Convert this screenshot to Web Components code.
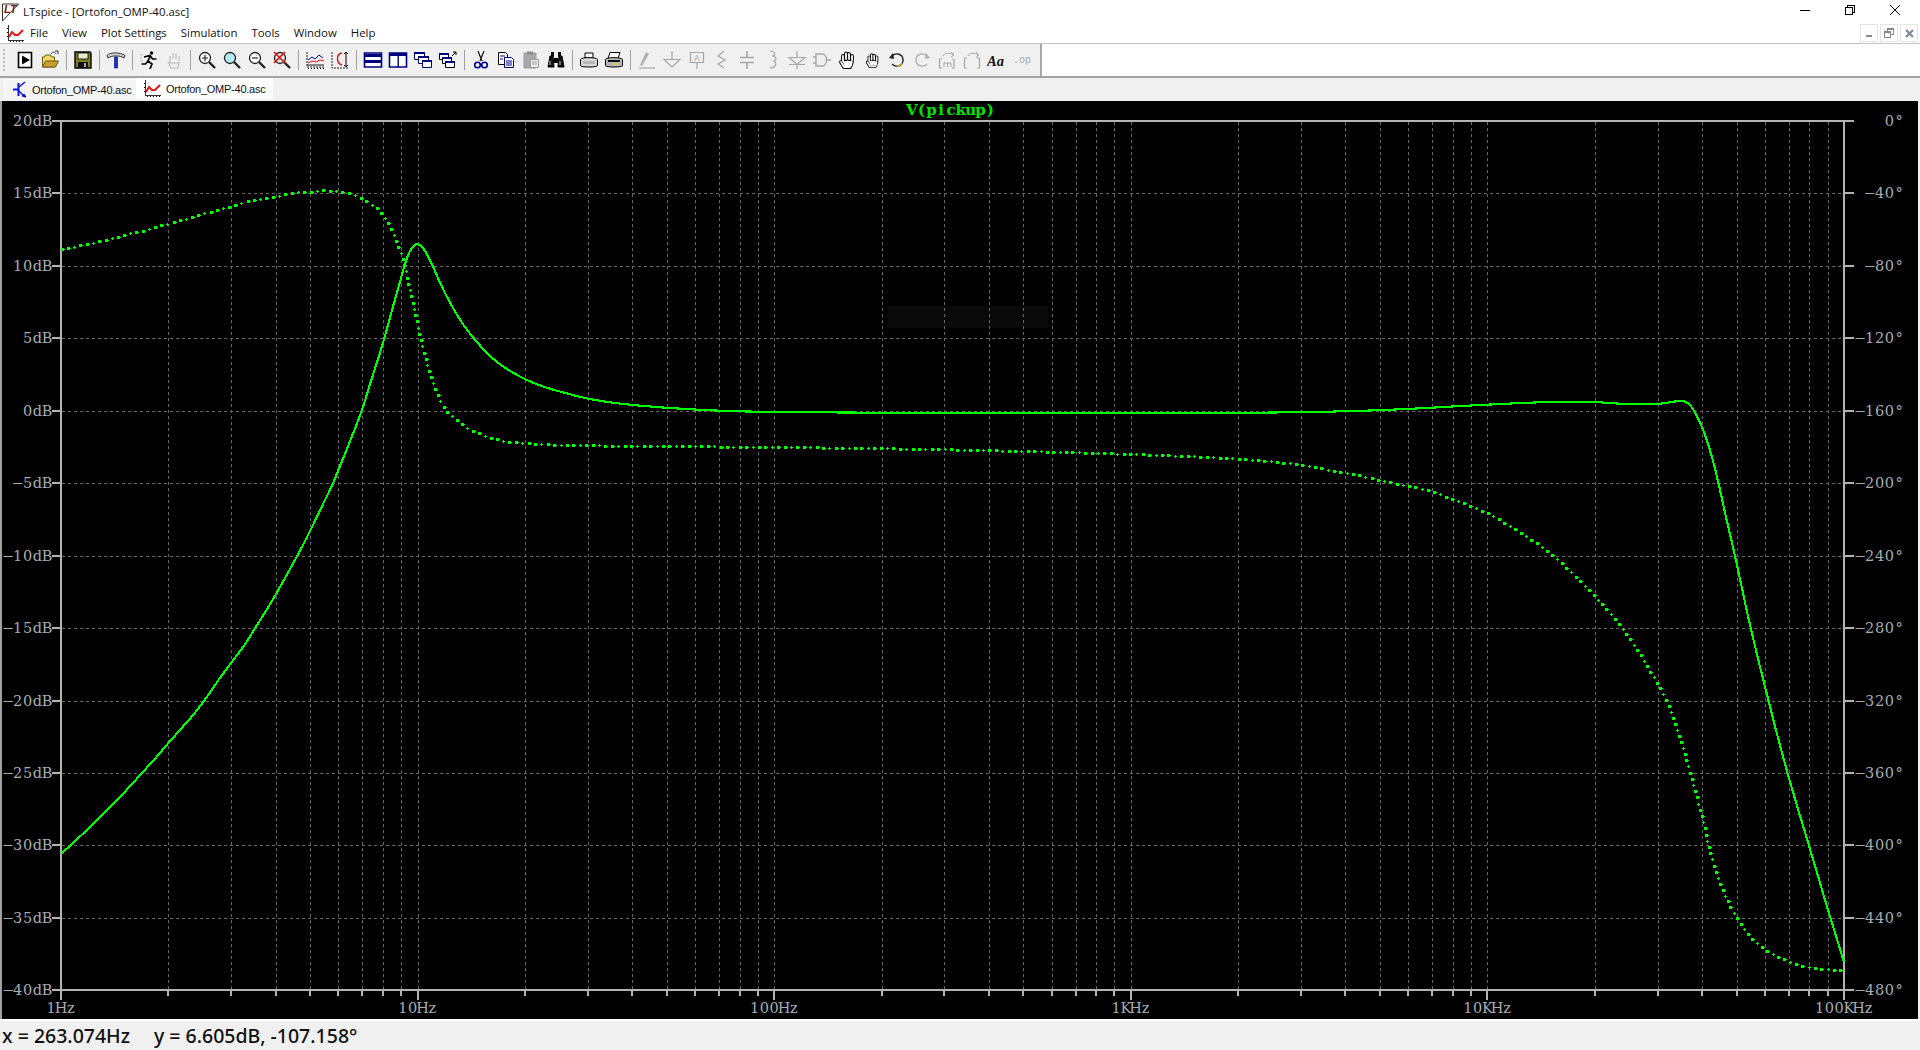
<!DOCTYPE html>
<html>
<head>
<meta charset="utf-8">
<title>LTspice</title>
<style>
  html, body { margin: 0; height: 100%; background: #fff; overflow: hidden; }
</style>
</head>
<body>
<lt-app>
  <title-bar>LTspice - [Ortofon_OMP-40.asc]</title-bar>
  <menu-bar>
    <span>File</span><span>View</span><span>Plot Settings</span><span>Simulation</span><span>Tools</span><span>Window</span><span>Help</span>
  </menu-bar>
  <tool-bar>
    <tool-btn icon="run"></tool-btn><tool-btn icon="open"></tool-btn><tool-sep></tool-sep>
    <tool-btn icon="save"></tool-btn><tool-sep></tool-sep>
    <tool-btn icon="hammer"></tool-btn><tool-sep></tool-sep>
    <tool-btn icon="runner"></tool-btn><tool-btn icon="halt"></tool-btn><tool-sep></tool-sep>
    <tool-btn icon="zoomin"></tool-btn><tool-btn icon="zoomfit"></tool-btn><tool-btn icon="zoomout"></tool-btn><tool-btn icon="zoomx"></tool-btn><tool-sep></tool-sep>
    <tool-btn icon="plot1"></tool-btn><tool-btn icon="plot2"></tool-btn><tool-sep></tool-sep>
    <tool-btn icon="tileh"></tool-btn><tool-btn icon="tilev"></tool-btn><tool-btn icon="cascade"></tool-btn><tool-btn icon="minall"></tool-btn><tool-sep></tool-sep>
    <tool-btn icon="cut"></tool-btn><tool-btn icon="copy"></tool-btn><tool-btn icon="paste"></tool-btn><tool-btn icon="find"></tool-btn><tool-sep></tool-sep>
    <tool-btn icon="preview"></tool-btn><tool-btn icon="print"></tool-btn><tool-sep></tool-sep>
    <tool-btn icon="wire"></tool-btn><tool-btn icon="ground"></tool-btn><tool-btn icon="label"></tool-btn><tool-btn icon="res"></tool-btn><tool-btn icon="cap"></tool-btn><tool-btn icon="ind"></tool-btn><tool-btn icon="diode"></tool-btn><tool-btn icon="gate"></tool-btn>
    <tool-btn icon="hand1"></tool-btn><tool-btn icon="hand2"></tool-btn><tool-btn icon="undo"></tool-btn><tool-btn icon="redo"></tool-btn><tool-btn icon="rotate"></tool-btn><tool-btn icon="mirror"></tool-btn><tool-btn icon="text"></tool-btn><tool-btn icon="op"></tool-btn>
  </tool-bar>
  <tab-strip>
    <tab-item icon="transistor">Ortofon_OMP-40.asc</tab-item>
    <tab-item icon="plot" active>Ortofon_OMP-40.asc</tab-item>
  </tab-strip>
  <plot-pane></plot-pane>
  <status-bar><span>x = 263.074Hz</span><span>y = 6.605dB, -107.158°</span></status-bar>
</lt-app>

<script>
const UI_FONT = '"Open Sans", "Noto Sans", sans-serif';

// small plot glyph, used for the menu icon and the tab
const PLOT_ICON = `<svg width="17" height="17" viewBox="0 0 17 17" shape-rendering="crispEdges">
  <path d="M1.5 0v15.5H17" fill="none" stroke="#333"/>
  <path d="M0 3.5h1M0 7.5h1M0 11.5h1M3.5 16v1M6.5 16v1M9.5 16v1M12.5 16v1M15.5 16v1" stroke="#000"/>
  <path d="M2 12l3-5 3 3 3 0 5-5" fill="none" stroke="#e01818" stroke-width="2" shape-rendering="auto"/>
</svg>`;

const hand = (c) => `<g fill="none" stroke-linecap="round" stroke-linejoin="round" stroke="${c}" stroke-width="3.8">
    <path d="M6 11V6M9 9V3.5M12 9V4M15 10V6M4 12l3 5h6l2-5"/></g>
  <g fill="none" stroke-linecap="round" stroke-linejoin="round" stroke="#fff" stroke-width="1.8">
    <path d="M6 11V6M9 9V3.5M12 9V4M15 10V6M4 12l3 5h6l2-5"/></g>
  <path d="M6 11h9v5H7z" fill="#fff"/>`;

const lens = (fill, extra) => `<circle cx="8" cy="8" r="5.5" fill="${fill}" stroke="#222" stroke-width="1.3"/>
  <path d="M12 12l6 6" stroke="#222" stroke-width="2.4"/>${extra}`;

const G = '#a6a6a6';
const NAVY = '#00007f';

const ICONS = {
  run: `<path d="M3.5 2.5h13v15h-13z" fill="#fff" stroke="#000" stroke-width="1.6"/><path d="M7 5.5l8 4.5-8 4.5z" fill="#000"/>`,
  open: `<path d="M2.5 17V7h2l1-2h5l1 2h3v10z" fill="#f2d86a" stroke="#6d5a10"/><path d="M2.5 17l3-6h13l-3 6z" fill="#c8a02c" stroke="#6d5a10"/><path d="M11 4c2-3 4-2 5 0" fill="none" stroke="#333"/><path d="M15 1h3v3" fill="none" stroke="#333"/>`,
  save: `<path d="M2 2h15l1 1v15H2z" fill="#7d7d22" stroke="#000" stroke-width="1.4"/><path d="M5 3h10v6H5z" fill="#e8e8d0" stroke="#000" stroke-width=".8"/><path d="M5 12h10v6H5z" fill="#111"/><path d="M11 13h2v4h-2z" fill="#aaa"/>`,
  hammer: `<path d="M1 5.5C4 2 14 2 19 5.5L18 8c-3-2-5-2-8-2s-5 0-8 2z" fill="#d4d4d4" stroke="#333"/><path d="M8.5 7h3v11h-3z" fill="#1a30c8" stroke="#00007f" stroke-width=".6"/>`,
  runner: `<circle cx="12.5" cy="3" r="1.7" fill="#000"/><path d="M11.5 5.5L9 11l4 3-2 5M9 11l-2.5 3-4 0M5 7l6-1.5 2.5 3.5 4 0" fill="none" stroke="#000" stroke-width="1.7"/><path d="M1 5h3M1 8h2M1 11h3" stroke="#bbb"/>`,
  halt: `<path d="M6 11V6M9 9V3M12 9V3.5M15 11V6M4 12l3 6h7l1-6M6 10v3h9" fill="none" stroke="#b8b8b8" stroke-width="1.1"/>`,
  zoomin: lens('#fff', `<path d="M5 8h6M8 5v6" stroke="#222" stroke-width="1.2"/>`),
  zoomfit: lens('#b8ecff', ''),
  zoomout: lens('#fff', `<path d="M5 8h6" stroke="#222" stroke-width="1.2"/>`),
  zoomx: lens('#e8e8e8', `<path d="M2 2l11 11M13 2L2 13" stroke="#e01010" stroke-width="1.6"/>`),
  plot1: `<path d="M2 2v15h17" fill="none" stroke="#222" stroke-dasharray="2 1"/><path d="M3 10l4-3 3 2 4-4 4 3" fill="none" stroke="#00009a"/><path d="M3 13l4-2 4 1 4-2 4 1" fill="none" stroke="#e01010"/><path d="M2 15h17" stroke="#222"/><path d="M3 18.5h1M6 18.5h1M9 18.5h1M12 18.5h1M15 18.5h1M18 18.5h1" stroke="#000"/>`,
  plot2: `<path d="M2 2v16h16" fill="none" stroke="#222" stroke-dasharray="2 1"/><path d="M12 3C6 4 6 13 12 15" fill="none" stroke="#e01010" stroke-width="1.4"/><path d="M16 2v15M14 4l2-2 2 2M14 15l2 2 2-2" fill="none" stroke="#000"/>`,
  tileh: `<path d="M1.5 3h17v14h-17z" fill="#fff" stroke="${NAVY}" stroke-width="1.6"/><path d="M1 4h18v3H1zM1 10h18v3H1z" fill="${NAVY}"/>`,
  tilev: `<path d="M1.5 3h17v14h-17z" fill="#fff" stroke="${NAVY}" stroke-width="1.6"/><path d="M1 3h18v3H1zM9.5 3h1.4v14H9.5z" fill="${NAVY}"/>`,
  cascade: `<g fill="#fff" stroke="${NAVY}"><path d="M1.5 2.5h10v7h-10z"/><path d="M5.5 6.5h10v7h-10z"/><path d="M9.5 10.5h9v7h-9z"/></g><path d="M1 2h11v2H1zM5 6h11v2H5zM9 10h10v2H9z" fill="${NAVY}"/>`,
  minall: `<g fill="#fff" stroke="#000" ><path d="M1.5 3.5h9v6h-9z"/><path d="M4.5 7.5h9v6h-9z"/><path d="M7.5 11.5h9v6h-9z"/></g><path d="M1 3h10v2H1zM4 7h10v2H4zM7 11h10v2H7z" fill="${NAVY}"/><path d="M14 6l4-4M15 2h3v3" fill="none" stroke="#000"/>`,
  cut: `<path d="M7 1l4 10M13 1L9 11" stroke="#111" stroke-width="1.2"/><circle cx="6.5" cy="15" r="2.8" fill="none" stroke="#00008b" stroke-width="1.6"/><circle cx="13.5" cy="15" r="2.8" fill="none" stroke="#00008b" stroke-width="1.6"/>`,
  copy: `<path d="M2.5 2.5h7l2 2v10h-9z" fill="#fff" stroke="#000"/><path d="M8.5 7.5h7l2 2v8h-9z" fill="#fff" stroke="#00007f"/><path d="M4 6h5M4 9h3M10 11h6M10 13h6M10 15h6" stroke="#00007f"/>`,
  paste: `<path d="M3 3h12v15H3z" fill="#a8a8a8" stroke="#9a9a9a"/><path d="M6 1.5h6v3H6z" fill="#8c8c8c"/><path d="M9.5 9.5h8v8h-8z" fill="#eee" stroke="#999"/><path d="M11 12h5M11 14h5" stroke="#999"/>`,
  find: `<path d="M2 17l2-11h3l1 11zM12 17l1-11h3l2 11z" fill="#111" stroke="#000"/><path d="M8 8h4v5H8z" fill="#000"/><path d="M5 2h3v5H5zM12 2h3v5h-3z" fill="#111"/><path d="M4 11v4M14 11v4" stroke="#ccc"/>`,
  preview: `<path d="M6 3h8v5H6z" fill="#fff" stroke="#000"/><path d="M1.5 9.5C2 7 18 7 18.5 9.5v6c0 2-17 2-17 0z" fill="#d8d8d8" stroke="#000"/><path d="M4 11h12v3H4z" fill="#b8b8b8"/>`,
  print: `<path d="M6 2.5h10l-2 6H4z" fill="#fff" stroke="#000"/><path d="M1.5 9.5C2 7 18 7 18.5 9.5v6c0 2-17 2-17 0z" fill="#b8b8b8" stroke="#000"/><path d="M4 11h12" stroke="#000" stroke-width="2"/><path d="M9 14h5" stroke="#e8c820" stroke-width="1.6"/>`,
  wire: `<path d="M3 15l6-13 3 2-7 12z" fill="#b0b0b0"/><path d="M2 18h16" stroke="${G}" stroke-width="1.2"/>`,
  ground: `<path d="M10 1v8M2 9.5h16L10 17z" fill="none" stroke="${G}" stroke-width="1.2"/>`,
  label: `<path d="M3.5 2.5h13v10h-13zM10 13v6" fill="none" stroke="${G}" stroke-width="1.2"/><text x="10" y="11" font-size="9" font-family="Liberation Mono" text-anchor="middle" fill="${G}">A</text>`,
  res: `<path d="M12 1L6 6l7 4-7 4 6 4" fill="none" stroke="${G}" stroke-width="1.2"/>`,
  cap: `<path d="M10 1v6M3 7.5h14M3 12.5h14M10 13v6" fill="none" stroke="${G}" stroke-width="1.6"/>`,
  ind: `<path d="M8 1c6 0 6 5 2 5 5 0 5 5 1 5 4 0 4 7-3 7" fill="none" stroke="${G}" stroke-width="1.2"/>`,
  diode: `<path d="M10 1v6M2 7.5h16L10 14.5zM2 14.5h16M10 15v4" fill="none" stroke="${G}" stroke-width="1.2"/>`,
  gate: `<path d="M4 4h6c6 0 6 12 0 12H4zM1 7h3M1 13h3M14 10h5" fill="none" stroke="${G}" stroke-width="1.4"/>`,
  hand1: `<g>${hand('#000')}</g>`,
  hand2: `<g transform="translate(2,2) scale(.85)">${hand('#000')}</g>`,
  undo: `<path d="M5 6c4-4 11-2 11 4s-7 8-11 4" fill="none" stroke="#222" stroke-width="1.4"/><path d="M15 13c-1 2-3 3-5 3" fill="none" stroke="#c8b020" stroke-width="1.4"/><path d="M2 8l5 1-1-6z" fill="#222"/>`,
  redo: `<path d="M15 6C11 2 4 4 4 10s7 8 11 4" fill="none" stroke="#b0b0b0" stroke-width="1.4"/><path d="M18 8l-5 1 1-6z" fill="#b0b0b0"/>`,
  rotate: `<path d="M6 6c1-3 7-4 10-1M14 2l3 3-3 2" fill="none" stroke="${G}"/><path d="M5 9H2.5v9H5M17 9h-2M17 9v9h-2" fill="none" stroke="${G}" stroke-width="1.2"/><path d="M7 13v4M7 13h7v4M10.5 13v4" fill="none" stroke="${G}"/>`,
  mirror: `<path d="M6 6c1-3 7-4 10-1M14 2l3 3-3 2" fill="none" stroke="${G}"/><path d="M5 8H2.5v10H5M15 8h2.5v10H15" fill="none" stroke="${G}" stroke-width="1.2"/>`,
  text: `<text x="0" y="16" font-size="14.5" font-weight="bold" font-style="italic" font-family="Liberation Serif" fill="#111">Aa</text>`,
  op: `<text x="10" y="13" font-size="10" font-family="Liberation Mono" text-anchor="middle" fill="${G}">.op</text>`
};

class LtApp extends HTMLElement {
  constructor() {
    super();
    this.attachShadow({ mode: "open" });
    this.shadowRoot.innerHTML = `
      <style>
        :host { display: flex; flex-direction: column; width: 1920px; height: 1050px; overflow: hidden; font-family: ${UI_FONT}; color: #000; }
      </style>
      <slot></slot>`;
  }
}

class TitleBar extends HTMLElement {
  constructor() {
    super();
    this.attachShadow({ mode: "open" });
    this.shadowRoot.innerHTML = `
      <style>
        :host { display: flex; align-items: center; height: 24px; flex: none; background: #fff; font-size: 11.4px; color: #111; }
        .logo { margin: 0 4px 0 2px; flex: none; }
        .title { flex: 1; padding-bottom: 1px; }
        .ctl { display: flex; align-self: flex-start; padding-right: 20px; }
        .ctl svg { display: block; margin-top: 5px; }
        .ctl svg + svg { margin-left: 35px; }
      </style>
      <svg class="logo" width="17" height="19" viewBox="0 0 17 19">
        <path d="M.5 1H16.5L.5 18z" fill="#fff" stroke="#333"/>
        <text x="2" y="10" font-size="11" font-weight="bold" font-style="italic" font-family="Liberation Sans" fill="#7a1420">LT</text>
      </svg>
      <span class="title"><slot></slot></span>
      <div class="ctl">
        <svg width="10" height="10" viewBox="0 0 10 10" shape-rendering="crispEdges"><path d="M0 5.5h10" stroke="#000"/></svg>
        <svg width="10" height="10" viewBox="0 0 10 10" shape-rendering="crispEdges"><path d="M.5 2.5h7v7h-7zM2.5 2.5v-2h7v7h-2" fill="none" stroke="#000"/></svg>
        <svg width="10" height="10" viewBox="0 0 10 10"><path d="M0 0l10 10M10 0L0 10" stroke="#000" stroke-width="1"/></svg>
      </div>`;
  }
}

class MenuBar extends HTMLElement {
  constructor() {
    super();
    this.attachShadow({ mode: "open" });
    this.shadowRoot.innerHTML = `
      <style>
        :host { display: flex; align-items: center; height: 19px; flex: none; background: #fff; font-size: 11.4px; color: #111; padding-left: 7px; border-bottom: 1px solid #c4c4c4; }
        ::slotted(span) { padding: 0 7px; }
        .icon { width: 17px; height: 17px; margin-right: -1px; flex: none; }
        .items { flex: 1; display: flex; padding-bottom: 2px; }
        .mdi { display: flex; gap: 2px; padding-right: 2px; margin-top: -1px; }
        .mdi div { width: 16px; height: 16px; border: 1px solid #e4e4e4; display: flex; align-items: center; justify-content: center; }
      </style>
      <div class="icon">${PLOT_ICON}</div>
      <div class="items"><slot></slot></div>
      <div class="mdi">
        <div><svg width="8" height="8" viewBox="0 0 8 8" shape-rendering="crispEdges"><path d="M1 6h6v2H1z" fill="#7e8a98"/></svg></div>
        <div><svg width="10" height="10" viewBox="0 0 10 10" shape-rendering="crispEdges"><path d="M.5 3.5h6v6h-6zM3.5 3.5v-3h6v6h-3M.5 4.5h6M3.5 1.5h6" fill="none" stroke="#7e8a98"/></svg></div>
        <div><svg width="9" height="9" viewBox="0 0 9 9"><path d="M1 1l7 7M8 1L1 8" stroke="#7e8a98" stroke-width="2.2"/></svg></div>
      </div>`;
  }
}

class ToolBar extends HTMLElement {
  constructor() {
    super();
    this.attachShadow({ mode: "open" });
    this.shadowRoot.innerHTML = `
      <style>
        :host { display: flex; height: 32px; flex: none; background: #fff; border-bottom: 2px solid #a4a4a4; }
        .bar { display: flex; align-items: center; background: #f0f0f0; border-right: 2px solid #a8a8a8; padding-left: 3px; box-sizing: border-box; width: 1042px; }
        .grip { width: 2px; height: 22px; margin-right: 7.5px; flex: none; background: repeating-linear-gradient(#bbb 0 2px, transparent 2px 4px); }
      </style>
      <div class="bar"><div class="grip"></div><slot></slot></div>`;
  }
}

class ToolBtn extends HTMLElement {
  constructor() {
    super();
    this.attachShadow({ mode: "open" });
    const name = this.getAttribute("icon");
    this.shadowRoot.innerHTML = `
      <style>
        :host { display: flex; align-items: center; justify-content: center; width: 25px; height: 26px; flex: none; }
        svg { display: block; }
      </style>
      <svg width="20" height="20" viewBox="0 0 20 20">${ICONS[name] || ""}</svg>`;
  }
}

class ToolSep extends HTMLElement {
  constructor() {
    super();
    this.attachShadow({ mode: "open" });
    this.shadowRoot.innerHTML = `
      <style>
        :host { display: flex; justify-content: center; width: 8px; height: 20px; flex: none; }
        div { width: 1px; background: #a0a0a0; height: 100%; }
      </style>
      <div></div>`;
  }
}

class TabStrip extends HTMLElement {
  constructor() {
    super();
    this.attachShadow({ mode: "open" });
    this.shadowRoot.innerHTML = `
      <style>
        :host { display: flex; align-items: flex-end; flex: none; background: #f0f0f0; padding: 0 0 2px 4px; box-sizing: border-box; height: 23px; }
      </style>
      <slot></slot>`;
  }
}

class TabItem extends HTMLElement {
  constructor() {
    super();
    this.attachShadow({ mode: "open" });
    const active = this.hasAttribute("active");
    const transistor = `<svg width="15" height="17" viewBox="0 0 15 17" fill="none" stroke="#1010d8">
        <path d="M0 8.5h5M5.5 2v13" stroke-width="2"/><path d="M6 6l6-5M6 10l6 6" stroke-width="1.4"/><path d="M9 15l4 1-2-3z" fill="#1010d8"/>
      </svg>`;
    this.shadowRoot.innerHTML = `
      <style>
        :host { display: flex; align-items: center; flex: none; font: 11px "Liberation Sans", Arial, sans-serif; letter-spacing: -0.25px; color: #111; box-sizing: border-box; white-space: nowrap; }
        :host(:not([active])) { width: 133px; height: 20px; padding-left: 8px; gap: 2px; background: #f4f4f4; border: 1px solid #fcfcfc; border-bottom: none; }
        :host([active]) { width: 136px; height: 21px; padding-left: 7px; gap: 5px; background: #fff; }
        .i { width: 17px; height: 17px; flex: none; }
      </style>
      <div class="i">${active ? PLOT_ICON : transistor}</div>
      <span><slot></slot></span>`;
  }
}

// plot axes, in page pixels
const X0 = 61, DEC = 356.6, Y0 = 121.4, DIV = 72.45;
const AXIS = "#b4b4b4", GRID = "#666", LABEL = "#a8adb2";

const SOLID = [[61,854],[81.7,835],[95,822],[111.7,805],[125,792],[141.7,773],[155,759],[168.3,743],[181.7,728],[191.7,717],[205,700],[218.3,680],[231.7,662],[245,645],[255,628],[271.7,602],[285,578],[296.7,557],[308.3,535],[320,510],[331.7,487],[340,466],[351.7,437],[361.7,412],[373.3,373],[383.3,343],[390,317],[400,282],[405,263],[410,250],[415,244],[419.3,244],[425,250],[433.3,267],[440,283],[450,303],[461.7,323],[473.3,338],[486.7,353],[500,365],[520,377],[540,386],[565,393],[588,399],[620,404],[667,408],[720,411],[774,412],[900,413],[1131,413],[1250,413],[1347,411.5],[1410,409],[1469,405.5],[1540,402],[1592,401.5],[1620,404],[1657,404.5],[1668,402.5],[1680,400.7],[1687,401.7],[1693,408],[1703,428],[1711.7,455],[1718,481],[1725,513],[1735,555],[1750,627],[1768.3,700],[1786.7,772],[1808.3,843],[1830,917],[1844,962]];

const DOTTED = [[61.7,249.3],[71.7,247.3],[90,243.3],[108.3,239.3],[125.7,234.3],[143.7,230.3],[161.7,225.3],[180,220.3],[197.7,215.3],[215.7,210.3],[233.7,205.3],[251.7,200.3],[270,197.3],[281,195.3],[298.3,192.3],[316.7,191.3],[323.7,190.3],[335,191.3],[352.7,194.3],[367.3,201.7],[382.7,214.3],[392,231.3],[398.3,246.7],[404,263.3],[408.3,284],[413.3,306],[417.3,323.3],[420.7,340],[425,356.7],[430.7,377.3],[438.7,397.3],[446.7,410.7],[461.7,424.3],[478.3,433.3],[496.7,439.3],[515,442.3],[540,444],[600,445.5],[774,447],[955,449.5],[1130,454],[1224,458],[1286,463],[1347,473],[1380,480],[1408.3,486],[1430,491],[1465.3,504],[1490,514.7],[1519.3,531.7],[1553.3,556],[1595.3,596.7],[1628.3,636.7],[1660,688.3],[1670.7,710.7],[1680,738.3],[1688.3,766.7],[1696,795],[1702.3,818.3],[1707.3,840],[1713.3,863.3],[1725,895],[1736,916.7],[1756.7,943.3],[1782.3,958.3],[1807.7,966.7],[1844,970.7]];

// take the wobble out of the hand traced points, ends stay put
function relax(pts) {
  return pts.map((p, i) => {
    if (i === 0 || i === pts.length - 1) return p;
    const a = pts[i - 1], b = pts[i + 1];
    return [p[0], p[1]].map((v, k) => 0.7 * v + 0.15 * (a[k] + b[k]));
  });
}

// catmull-rom through the traced points
function smooth(pts, n) {
  const out = [];
  for (let i = 0; i < pts.length - 1; i++) {
    const p0 = pts[i - 1] || pts[i], p1 = pts[i], p2 = pts[i + 1], p3 = pts[i + 2] || p2;
    for (let k = 0; k < n; k++) {
      const t = k / n, t2 = t * t, t3 = t2 * t;
      out.push([0, 1].map(a => 0.5 * (2 * p1[a] + (p2[a] - p0[a]) * t + (2 * p0[a] - 5 * p1[a] + 4 * p2[a] - p3[a]) * t2 + (3 * p1[a] - p0[a] - 3 * p2[a] + p3[a]) * t3)));
    }
  }
  out.push(pts[pts.length - 1]);
  return out;
}

// phase is dotted: runs of blob, blob, plus along the curve
function dots(pts, step) {
  const line = smooth(pts, 8);
  let d = "", left = 0, idx = 0;
  for (let i = 1; i < line.length; i++) {
    const dx = line[i][0] - line[i - 1][0], dy = line[i][1] - line[i - 1][1];
    const len = Math.hypot(dx, dy);
    let pos = left;
    while (pos < len) {
      const x = Math.round(line[i - 1][0] + dx * pos / len), y = Math.round(line[i - 1][1] + dy * pos / len);
      if (idx % 3 === 2) d += `M${x - 1} ${y}h3v1h-3zM${x} ${y - 1}h1v3h-1z`;
      else d += `M${x - 1} ${y - 1}h3v3h-3zM${x + 2} ${y}h1v1h-1z`;
      idx++;
      pos += step;
    }
    left = pos - len;
  }
  return d;
}

function label(str, x, y, anchor, cls) {
  // the plot font is fixed pitch, 9.8px a cell
  const w = 9.8, chars = [...str];
  const start = anchor === "end" ? x - chars.length * w : anchor === "middle" ? x - chars.length * w / 2 : x;
  const xs = chars.map((c, i) => (start + (i + 0.5) * w).toFixed(1)).join(" ");
  return `<text class="${cls}" x="${xs}" y="${y}" text-anchor="middle">${str}</text>`;
}

class PlotPane extends HTMLElement {
  constructor() {
    super();
    this.attachShadow({ mode: "open" });
    const x = f => X0 + DEC * Math.log10(f);
    let grid = "", axes = "", texts = "";

    for (let i = 0; i < 13; i++) {
      const y = Math.floor(Y0 + DIV * i);
      if (i > 0 && i < 12) grid += `<path d="M62 ${y + .5}H1843" />`;
      axes += `<path d="M52 ${y}H61M1845 ${y}H1854" />`;
      const db = 20 - 5 * i;
      texts += label((db < 0 ? "\u2212" + (-db) : db) + "dB", 52, y + 5, "end", "ax");
      const deg = -40 * i;
      texts += label((deg < 0 ? "\u2212" + (-deg) : deg) + "\u00b0", 1904, y + 5, "end", "ax");
    }
    for (let p = 0; p < 5; p++) {
      for (let m = 1; m < 10; m++) {
        const gx = Math.round(x(m * 10 ** p));
        if (m > 1 || p > 0) grid += `<path d="M${gx + .5} 122V990" />`;
        axes += `<path d="M${gx} 990V${m === 1 ? 1000 : 996}" />`;
      }
    }
    axes += `<path d="M1844 990V1000" />`;
    ["1Hz", "10Hz", "100Hz", "1KHz", "10KHz", "100KHz"].forEach((t, i) => {
      texts += label(t, X0 + DEC * i, 1013, "middle", "ax");
    });
    texts += label("V(pickup)", 951, 115, "middle", "trace");

    const solid = smooth(relax(SOLID), 6).map(p => p[0].toFixed(1) + "," + p[1].toFixed(1)).join(" ");

    this.shadowRoot.innerHTML = `
      <style>
        :host { display: block; flex: none; height: 918px; background: #000; border-left: 2px solid #a0a0a0; border-right: 2px solid #f0f0f0; box-sizing: border-box; }
        svg { display: block; width: 1916px; height: 918px; }
        text { font: 14.5px "DejaVu Serif", "Liberation Serif", serif; }
        .ax { fill: ${LABEL}; }
        .trace { fill: #00e400; font-weight: bold; font-size: 15px; }
      </style>
      <svg viewBox="2 101 1916 918">
        <rect x="888" y="306" width="160" height="22" fill="#090909"/>
        <g stroke="${GRID}" stroke-dasharray="3 3" shape-rendering="crispEdges" fill="none">${grid}</g>
        <g stroke="${AXIS}" stroke-width="2" shape-rendering="crispEdges" fill="none">
          <path d="M52 121H1854M52 990H1854M61 120V997M1844 120V1000" />
          ${axes}
        </g>
        <polyline points="${solid}" fill="none" stroke="#00ff00" stroke-width="2.1" stroke-linejoin="round" shape-rendering="crispEdges"/>
        <path d="${dots(DOTTED, 6.4)}" fill="#00ff00" shape-rendering="crispEdges"/>
        ${texts}
      </svg>`;
  }
}

class StatusBar extends HTMLElement {
  constructor() {
    super();
    this.attachShadow({ mode: "open" });
    this.shadowRoot.innerHTML = `
      <style>
        :host { display: flex; align-items: center; flex: 1; background: #f0f0f0; border-top: 2px solid #fff; padding-left: 2px; gap: 24px; font-size: 19.5px; font-weight: 500; color: #111; font-family: "Noto Sans", "Open Sans", sans-serif; }
      </style>
      <slot></slot>`;
  }
}

customElements.define("lt-app", LtApp);
customElements.define("title-bar", TitleBar);
customElements.define("menu-bar", MenuBar);
customElements.define("tool-bar", ToolBar);
customElements.define("tool-btn", ToolBtn);
customElements.define("tool-sep", ToolSep);
customElements.define("tab-strip", TabStrip);
customElements.define("tab-item", TabItem);
customElements.define("plot-pane", PlotPane);
customElements.define("status-bar", StatusBar);
</script>
</body>
</html>
